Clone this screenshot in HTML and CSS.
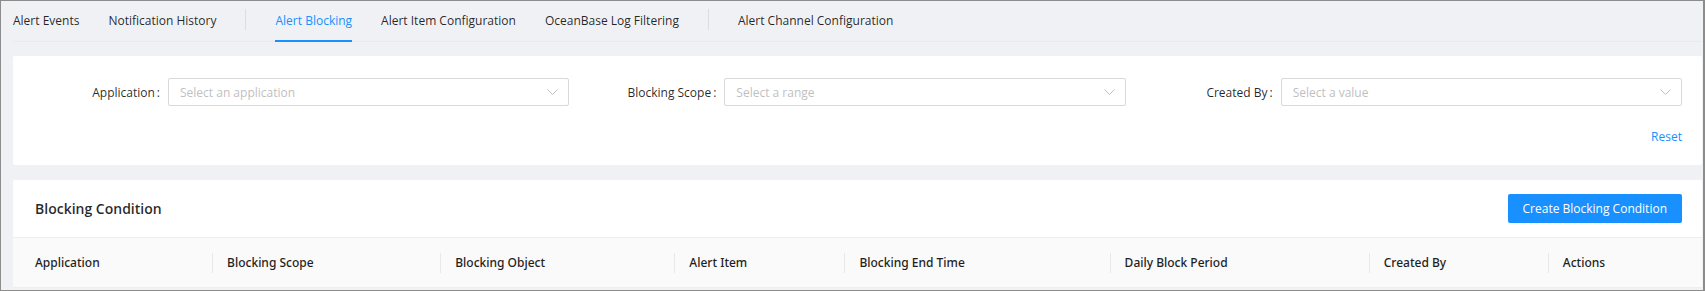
FILE: index.html
```html
<!DOCTYPE html>
<html lang="en">

<head>
    <meta charset="UTF-8">
    <meta name="viewport" content="width=device-width, initial-scale=1.0">
    <title>Alert Blocking</title>
    <link rel="stylesheet" href="styles.css">
</head>

<body>
    <div class="page">
        <div class="tabs">
            <a class="tab">Alert Events</a>
            <a class="tab">Notification History</a>
            <span class="tab-divider"></span>
            <a class="tab active">Alert Blocking</a>
            <a class="tab">Alert Item Configuration</a>
            <a class="tab">OceanBase Log Filtering</a>
            <span class="tab-divider"></span>
            <a class="tab">Alert Channel Configuration</a>
        </div>

        <div class="card filter-card">
            <div class="filter-row">
                <div class="form-item">
                    <label class="form-label">Application<span class="colon">:</span></label>
                    <div class="select">
                        <span class="placeholder">Select an application</span>
                        <svg class="arrow" width="11" height="6" viewBox="0 0 11 6"><path d="M0.5 0.5 L5.5 5.5 L10.5 0.5" fill="none" stroke="#bfbfbf" stroke-width="1"/></svg>
                    </div>
                </div>
                <div class="form-item">
                    <label class="form-label">Blocking Scope<span class="colon">:</span></label>
                    <div class="select">
                        <span class="placeholder">Select a range</span>
                        <svg class="arrow" width="11" height="6" viewBox="0 0 11 6"><path d="M0.5 0.5 L5.5 5.5 L10.5 0.5" fill="none" stroke="#bfbfbf" stroke-width="1"/></svg>
                    </div>
                </div>
                <div class="form-item">
                    <label class="form-label">Created By<span class="colon">:</span></label>
                    <div class="select">
                        <span class="placeholder">Select a value</span>
                        <svg class="arrow" width="11" height="6" viewBox="0 0 11 6"><path d="M0.5 0.5 L5.5 5.5 L10.5 0.5" fill="none" stroke="#bfbfbf" stroke-width="1"/></svg>
                    </div>
                </div>
            </div>
            <div class="filter-actions">
                <a class="link">Reset</a>
            </div>
        </div>

        <div class="card table-card">
            <div class="card-header">
                <h2 class="card-title">Blocking Condition</h2>
                <button class="button primary">Create Blocking Condition</button>
            </div>
            <table class="table">
                <colgroup>
                    <col style="width: 199px">
                    <col style="width: 228px">
                    <col style="width: 234px">
                    <col style="width: 170px">
                    <col style="width: 265px">
                    <col style="width: 259px">
                    <col style="width: 179px">
                    <col style="width: 154px">
                </colgroup>
                <thead>
                    <tr>
                        <th>Application</th>
                        <th>Blocking Scope</th>
                        <th>Blocking Object</th>
                        <th>Alert Item</th>
                        <th>Blocking End Time</th>
                        <th>Daily Block Period</th>
                        <th>Created By</th>
                        <th>Actions</th>
                    </tr>
                </thead>
            </table>
        </div>
    </div>
</body>

</html>
```

FILE: styles.css
```css
* {
    box-sizing: border-box;
}

body {
    margin: 0;
    font-family: "Open Sans", "Noto Sans", Arial, sans-serif;
    font-size: 12px;
    color: rgba(0, 0, 0, 0.85);
}

.page {
    width: 1705px;
    height: 291px;
    overflow: hidden;
    background-color: #f0f1f5;
    border: 1px solid #8c8c8c;
    border-right-width: 2px;
    padding: 0 1px 0 12px;
}

/* top tabs */
.tabs {
    display: flex;
    gap: 29px;
    height: 41px;
    border-bottom: 1px solid #e9eaee;
}

.tab {
    display: flex;
    align-items: center;
    height: 41px;
    margin-bottom: -1px;
    padding-bottom: 2px;
    color: rgba(0, 0, 0, 0.85);
    cursor: pointer;
    white-space: nowrap;
}

.tab.active {
    color: #1890ff;
    box-shadow: inset 0 -2px 0 #1890ff;
}

.tab-divider {
    width: 1px;
    height: 21px;
    margin-top: 8px;
    background-color: #dcdde1;
}

/* cards */
.card {
    background-color: #fff;
    border-radius: 2px;
}

.filter-card {
    margin-top: 14px;
    padding: 22px 20px 19px 20px;
}

.filter-row {
    display: grid;
    grid-template-columns: repeat(3, 1fr);
    gap: 20px;
}

.form-item {
    display: flex;
    align-items: center;
}

.form-label {
    width: 135px;
    flex-shrink: 0;
    text-align: right;
    white-space: nowrap;
}

.colon {
    margin: 0 8px 0 2px;
}

.select {
    flex: 1;
    display: flex;
    align-items: center;
    justify-content: space-between;
    height: 28px;
    padding: 0 10px 0 11px;
    border: 1px solid #d9d9d9;
    border-radius: 2px;
}

.placeholder {
    color: #bfbfbf;
}

.filter-actions {
    display: flex;
    justify-content: flex-end;
    margin-top: 22px;
    line-height: 18px;
}

.link {
    color: #1890ff;
    cursor: pointer;
}

.table-card {
    margin-top: 15px;
}

.card-header {
    display: flex;
    align-items: center;
    justify-content: space-between;
    height: 57px;
    padding: 0 20px 0 22px;
}

.card-title {
    margin: 0;
    font-size: 14px;
    font-weight: 600;
    color: rgba(0, 0, 0, 0.85);
}

.button {
    height: 29px;
    padding: 0 15px;
    border: none;
    border-radius: 2px;
    font-family: inherit;
    font-size: 12px;
    cursor: pointer;
}

.button.primary {
    background-color: #1890ff;
    color: #fff;
}

/* table */
.table {
    width: 100%;
    table-layout: fixed;
    border-collapse: collapse;
}

.table th {
    position: relative;
    height: 50px;
    padding: 0 15px;
    background-color: #fafafa;
    border-top: 1px solid #eeeeee;
    border-bottom: 1px solid #eeeeee;
    text-align: left;
    font-family: "Noto Sans", "Open Sans", sans-serif;
    font-weight: 500;
    color: #1f1f1f;
    white-space: nowrap;
}

.table th:first-child {
    padding-left: 22px;
}

.table th + th::before {
    content: "";
    position: absolute;
    left: 0;
    top: 50%;
    width: 1px;
    height: 20px;
    margin-top: -10px;
    background-color: #e8e8e8;
}
```
